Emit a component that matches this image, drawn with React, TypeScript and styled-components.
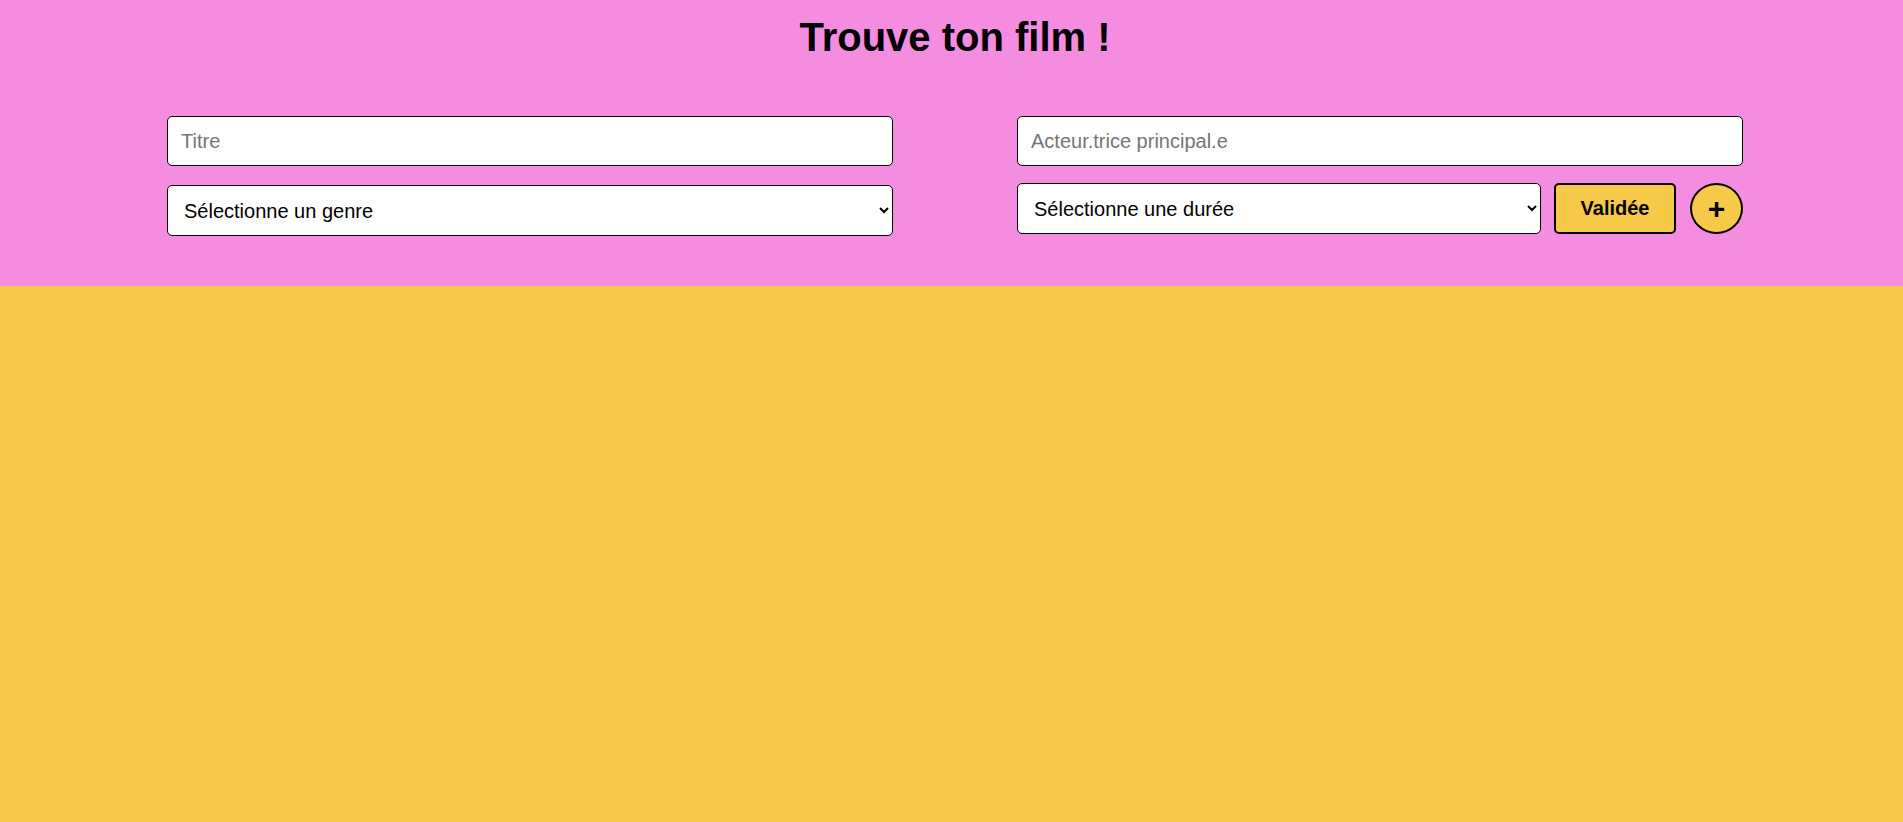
import React from 'react';
import styled, { createGlobalStyle } from 'styled-components';

const GlobalStyle = createGlobalStyle`
    html, body {
        margin: 0;
        padding: 0;
        background-color: #f7c948;
        font-family: 'Liberation Sans', Arial, sans-serif;
    }
    #root {
        min-height: 100vh;
    }
`;

const Header = styled.header`
    background-color: #f48cdf;
    padding: 15px 0 50px 7px;
`;

const Title = styled.h1`
    margin: 0;
    text-align: center;
    font-size: 40px;
    font-weight: bold;
    color: #000;
`;

const Form = styled.form`
    display: grid;
    grid-template-columns: 726px 726px;
    column-gap: 124px;
    justify-content: center;
    margin-top: 56px;
`;

const Column = styled.div`
    display: flex;
    flex-direction: column;
`;

const TextInput = styled.input`
    box-sizing: border-box;
    width: 100%;
    height: 50px;
    padding: 0 13px;
    border: 1px solid #000;
    border-radius: 5px;
    background: #fff;
    font-family: 'Liberation Sans', Arial, sans-serif;
    font-size: 20px;
    outline: none;

    &::placeholder {
        color: #757575;
    }
`;

const Select = styled.select<{ $offset: number }>`
    box-sizing: border-box;
    width: 100%;
    height: 51px;
    margin-top: ${p => p.$offset}px;
    padding: 0 6px 0 12px;
    border: 1px solid #000;
    border-radius: 5px;
    background: #fff;
    color: #000;
    font-family: 'Liberation Sans', Arial, sans-serif;
    font-size: 20px;
`;

const ActionRow = styled.div`
    display: flex;
    align-items: flex-start;
    margin-top: 17px;

    ${Select} {
        flex: 1;
        margin-top: 0;
    }
`;

const SubmitButton = styled.button`
    box-sizing: border-box;
    width: 122px;
    height: 51px;
    margin-left: 13px;
    border: 2px solid #000;
    border-radius: 5px;
    background-color: #f7c948;
    color: #000;
    font-family: 'Liberation Sans', Arial, sans-serif;
    font-size: 20px;
    font-weight: bold;
    cursor: pointer;
`;

const PlusButton = styled.button`
    box-sizing: border-box;
    width: 53px;
    height: 51px;
    margin-left: 14px;
    padding: 0;
    border: 2px solid #000;
    border-radius: 50%;
    background-color: #f7c948;
    color: #000;
    font-family: 'Liberation Sans', Arial, sans-serif;
    font-size: 30px;
    font-weight: bold;
    line-height: 1;
    cursor: pointer;
`;

export default function App() {
    return (
        <>
            <GlobalStyle />
            <Header>
                <Title>Trouve ton film !</Title>
                <Form onSubmit={e => e.preventDefault()}>
                    <Column>
                        <TextInput type="text" placeholder="Titre" />
                        <Select $offset={19} defaultValue="">
                            <option value="">Sélectionne un genre</option>
                            <option value="action">Action</option>
                            <option value="comedie">Comédie</option>
                            <option value="drame">Drame</option>
                        </Select>
                    </Column>
                    <Column>
                        <TextInput type="text" placeholder="Acteur.trice principal.e" />
                        <ActionRow>
                            <Select $offset={0} defaultValue="">
                                <option value="">Sélectionne une durée</option>
                                <option value="court">Moins de 1h30</option>
                                <option value="moyen">1h30 - 2h</option>
                                <option value="long">Plus de 2h</option>
                            </Select>
                            <SubmitButton type="submit">Validée</SubmitButton>
                            <PlusButton type="button">+</PlusButton>
                        </ActionRow>
                    </Column>
                </Form>
            </Header>
        </>
    );
}
